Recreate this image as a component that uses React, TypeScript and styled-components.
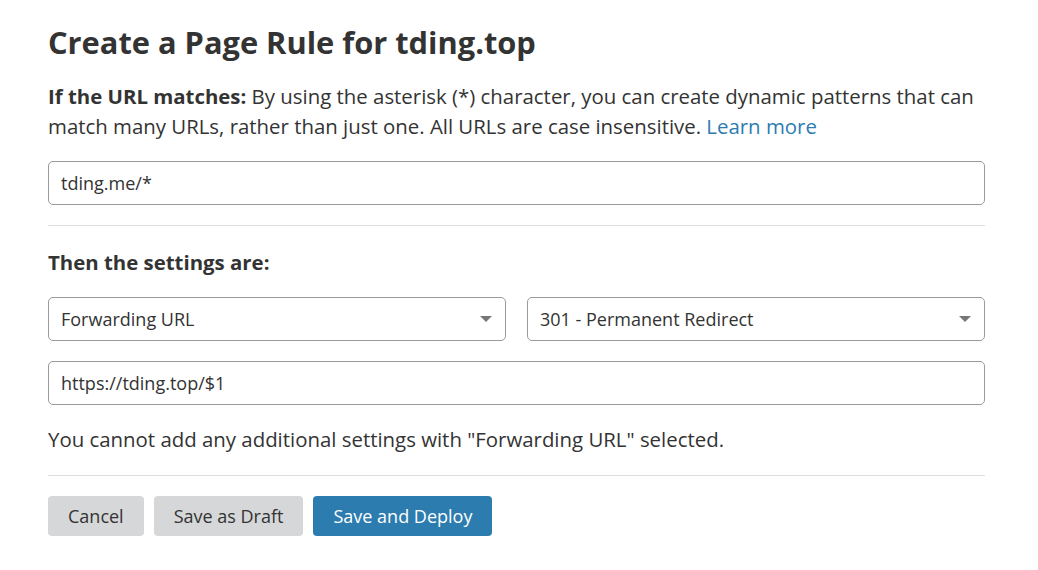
import React from "react";
import styled, { createGlobalStyle } from "styled-components";

const Global = createGlobalStyle`
  html, body { margin: 0; padding: 0; background: #fff; }
  body { font-family: "Open Sans", "Noto Sans", sans-serif; color: #333; }
`;

const Page = styled.div`
  width: 937px;
  margin-left: 48px;
  padding-top: 25px;
  display: flex;
  flex-direction: column;
`;

const Title = styled.h1`
  margin: 0 0 22px;
  font-size: 30.8px;
  line-height: 34px;
  font-weight: 700;
  color: #333;
`;

const Text = styled.p<{ $mb?: number; $mt?: number }>`
  margin: ${(p) => p.$mt ?? 0}px 0 ${(p) => p.$mb ?? 0}px;
  font-size: 20.4px;
  line-height: 30px;
  color: #333;
  white-space: nowrap;
  b { font-weight: 700; }
`;

const Link = styled.a`
  color: #2c7cb0;
  text-decoration: none;
`;

const Field = styled.div`
  height: 44px;
  box-sizing: border-box;
  border: 1px solid #9a9a9a;
  border-radius: 5px;
  padding: 0 12px;
  display: flex;
  align-items: center;
  justify-content: space-between;
  font-size: 18px;
  color: #333;
  background: #fff;
`;

const Arrow = styled.span`
  width: 0;
  height: 0;
  border-left: 6px solid transparent;
  border-right: 6px solid transparent;
  border-top: 6px solid #777;
  margin-right: 1px;
`;

const Divider = styled.hr<{ $mt: number; $mb: number }>`
  margin: ${(p) => p.$mt}px 0 ${(p) => p.$mb}px;
  border: 0;
  border-top: 1px solid #ddd;
  height: 0;
`;

const Row = styled.div`
  display: grid;
  grid-template-columns: 1fr 1fr;
  column-gap: 21px;
  margin-bottom: 20px;
`;

const Buttons = styled.div`
  display: flex;
  gap: 10px;
`;

const Button = styled.button<{ $primary?: boolean }>`
  height: 40px;
  padding: 0 20px;
  border: 0;
  border-radius: 4px;
  font-family: inherit;
  font-size: 18px;
  background: ${(p) => (p.$primary ? "#2c7cb0" : "#d5d7d8")};
  color: ${(p) => (p.$primary ? "#fff" : "#333")};
  cursor: pointer;
`;

export default function App() {
  return (
    <>
      <Global />
      <Page>
        <Title>Create a Page Rule for tding.top</Title>
        <Text $mb={20}>
          <b>If the URL matches:</b> By using the asterisk (*) character, you can create dynamic
          patterns that can
          <br />
          match many URLs, rather than just one. All URLs are case insensitive.{" "}
          <Link href="#">Learn more</Link>
        </Text>
        <Field>tding.me/*</Field>
        <Divider $mt={20} $mb={21} />
        <Text $mb={20}>
          <b>Then the settings are:</b>
        </Text>
        <Row>
          <Field>
            Forwarding URL
            <Arrow />
          </Field>
          <Field>
            301 - Permanent Redirect
            <Arrow />
          </Field>
        </Row>
        <Field>https://tding.top/$1</Field>
        <Text $mt={19}>You cannot add any additional settings with "Forwarding URL" selected.</Text>
        <Divider $mt={21} $mb={20} />
        <Buttons>
          <Button>Cancel</Button>
          <Button>Save as Draft</Button>
          <Button $primary>Save and Deploy</Button>
        </Buttons>
      </Page>
    </>
  );
}
